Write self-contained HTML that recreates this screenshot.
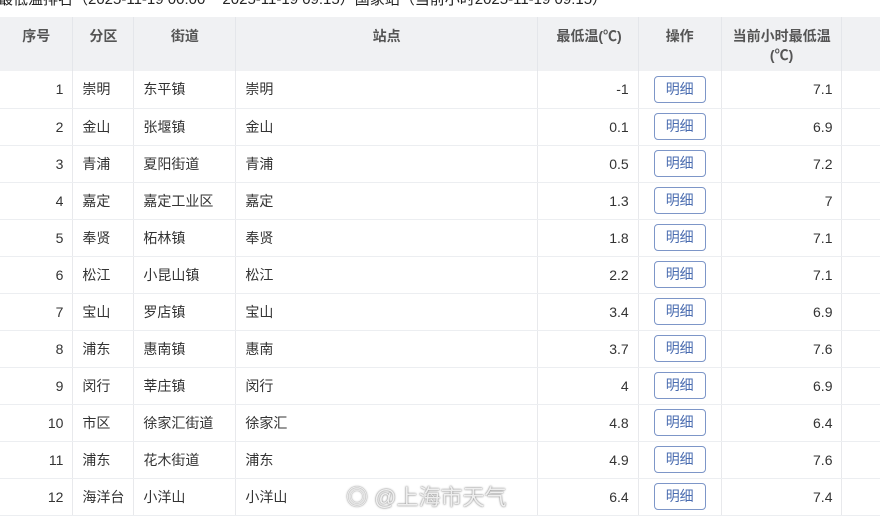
<!DOCTYPE html>
<html><head><meta charset="utf-8"><style>
body{margin:0;width:880px;height:504px;overflow:hidden;background:#fff;font-family:"Liberation Sans","Noto Sans CJK SC",sans-serif;color:#333;position:relative}
.t{position:absolute;top:-12px;left:-2px;font-size:15px;color:#222;white-space:nowrap}
table{position:absolute;top:17px;left:0;border-collapse:collapse;font-size:14px;table-layout:fixed}
th{background:#f0f1f3;height:54px;font-weight:bold;color:#555;font-size:14px;border-right:1px solid #e4e6ea;vertical-align:top;padding-top:10px;box-sizing:border-box;line-height:19px}
td{height:37px;border-right:1px solid #e8e9ec;border-bottom:1px solid #eceef1;padding:0 9px;box-sizing:border-box;white-space:nowrap}
.r{text-align:right}
.b{display:inline-block;width:52px;height:27px;border:1px solid #7d96c8;border-radius:4px;color:#4a6cb0;text-align:center;line-height:25px;font-size:14px;box-sizing:border-box}
.c{text-align:center}
.wm{position:absolute;left:346px;top:480px;font-size:22px;color:rgba(255,255,255,.85);text-shadow:0 0 2px #888,0 0 1px #888;white-space:nowrap}
</style></head><body>
<div class="t">最低温排名（2025-11-19 00:00 ~ 2025-11-19 09:15）国家站（当前小时2025-11-19 09:15）</div>
<table>
<colgroup><col style="width:73px"><col style="width:60px"><col style="width:102px"><col style="width:302px"><col style="width:101px"><col style="width:83px"><col style="width:121px"><col style="width:38px"></colgroup>
<tr><th>序号</th><th>分区</th><th>街道</th><th>站点</th><th class="r" style="padding-right:16px">最低温(℃)</th><th>操作</th><th>当前小时最低温<br>(℃)</th><th style="border-right:0"></th></tr>
<tr><td class="r">1</td><td>崇明</td><td>东平镇</td><td>崇明</td><td class="r">-1</td><td class="c"><span class="b">明细</span></td><td class="r">7.1</td><td style="border-right:0"></td></tr>
<tr><td class="r">2</td><td>金山</td><td>张堰镇</td><td>金山</td><td class="r">0.1</td><td class="c"><span class="b">明细</span></td><td class="r">6.9</td><td style="border-right:0"></td></tr>
<tr><td class="r">3</td><td>青浦</td><td>夏阳街道</td><td>青浦</td><td class="r">0.5</td><td class="c"><span class="b">明细</span></td><td class="r">7.2</td><td style="border-right:0"></td></tr>
<tr><td class="r">4</td><td>嘉定</td><td>嘉定工业区</td><td>嘉定</td><td class="r">1.3</td><td class="c"><span class="b">明细</span></td><td class="r">7</td><td style="border-right:0"></td></tr>
<tr><td class="r">5</td><td>奉贤</td><td>柘林镇</td><td>奉贤</td><td class="r">1.8</td><td class="c"><span class="b">明细</span></td><td class="r">7.1</td><td style="border-right:0"></td></tr>
<tr><td class="r">6</td><td>松江</td><td>小昆山镇</td><td>松江</td><td class="r">2.2</td><td class="c"><span class="b">明细</span></td><td class="r">7.1</td><td style="border-right:0"></td></tr>
<tr><td class="r">7</td><td>宝山</td><td>罗店镇</td><td>宝山</td><td class="r">3.4</td><td class="c"><span class="b">明细</span></td><td class="r">6.9</td><td style="border-right:0"></td></tr>
<tr><td class="r">8</td><td>浦东</td><td>惠南镇</td><td>惠南</td><td class="r">3.7</td><td class="c"><span class="b">明细</span></td><td class="r">7.6</td><td style="border-right:0"></td></tr>
<tr><td class="r">9</td><td>闵行</td><td>莘庄镇</td><td>闵行</td><td class="r">4</td><td class="c"><span class="b">明细</span></td><td class="r">6.9</td><td style="border-right:0"></td></tr>
<tr><td class="r">10</td><td>市区</td><td>徐家汇街道</td><td>徐家汇</td><td class="r">4.8</td><td class="c"><span class="b">明细</span></td><td class="r">6.4</td><td style="border-right:0"></td></tr>
<tr><td class="r">11</td><td>浦东</td><td>花木街道</td><td>浦东</td><td class="r">4.9</td><td class="c"><span class="b">明细</span></td><td class="r">7.6</td><td style="border-right:0"></td></tr>
<tr><td class="r">12</td><td>海洋台</td><td>小洋山</td><td>小洋山</td><td class="r">6.4</td><td class="c"><span class="b">明细</span></td><td class="r">7.4</td><td style="border-right:0"></td></tr>
</table>
<div class="wm">◎ @上海市天气</div>
</body></html>
